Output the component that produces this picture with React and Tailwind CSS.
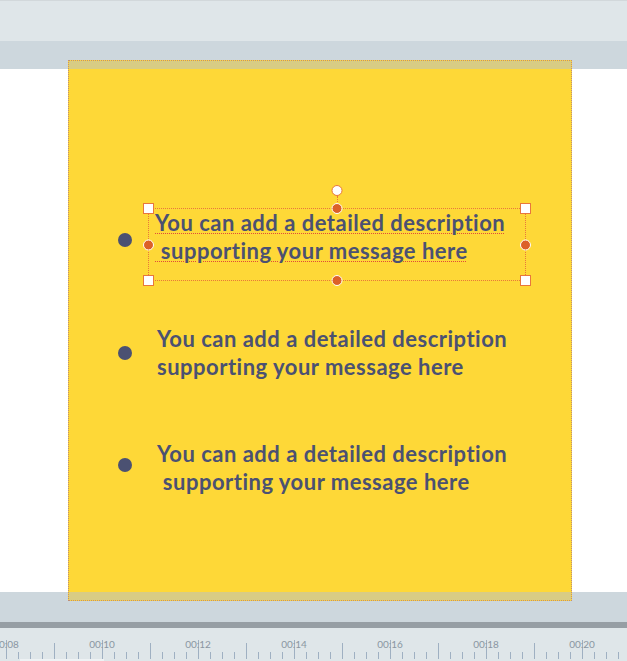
import React from "react";

// the three bullet rows on the slide
const items = [
  { lines: ["You can add a detailed description", " supporting your message here"], dot: 24, gap: "ml-[23px]", selected: true },
  { lines: ["You can add a detailed description", "supporting your message here"], dot: 21, gap: "ml-[25px]", mt: "mt-[60px]" },
  { lines: ["You can add a detailed description", " supporting your message here"], dot: 18, gap: "ml-[25px]", mt: "mt-[59px]" },
];

const labels = ["00:08", "00:10", "00:12", "00:14", "00:16", "00:18", "00:20"];

function Selection() {
  return (
    <div className="absolute left-[30px] top-[-1px] w-[378px] h-[73px] border border-dotted border-[#e8773c] pointer-events-none">
      {/* rotate handle */}
      <div className="absolute left-1/2 -translate-x-1/2 top-[-24px] w-[11px] h-[11px] rounded-full bg-white border-[1.5px] border-[#e8773c]" />
      <div className="absolute left-1/2 top-[-13px] h-[8px] border-l border-dotted border-[#e8773c]" />
      {/* corners */}
      <div className="absolute left-[-6px] top-[-6px] w-[11px] h-[11px] bg-white border-[1.5px] border-[#e8773c]" />
      <div className="absolute right-[-6px] top-[-6px] w-[11px] h-[11px] bg-white border-[1.5px] border-[#e8773c]" />
      <div className="absolute left-[-6px] bottom-[-6px] w-[11px] h-[11px] bg-white border-[1.5px] border-[#e8773c]" />
      <div className="absolute right-[-6px] bottom-[-6px] w-[11px] h-[11px] bg-white border-[1.5px] border-[#e8773c]" />
      {/* mids */}
      <div className="absolute left-1/2 -translate-x-1/2 top-[-6px] w-[11px] h-[11px] rounded-full bg-[#dc6128] border-[1.5px] border-white" />
      <div className="absolute left-1/2 -translate-x-1/2 bottom-[-6px] w-[11px] h-[11px] rounded-full bg-[#dc6128] border-[1.5px] border-white" />
      <div className="absolute top-1/2 -translate-y-1/2 left-[-6px] w-[11px] h-[11px] rounded-full bg-[#dc6128] border-[1.5px] border-white" />
      <div className="absolute top-1/2 -translate-y-1/2 right-[-6px] w-[11px] h-[11px] rounded-full bg-[#dc6128] border-[1.5px] border-white" />
    </div>
  );
}

function Item({ item }) {
  return (
    <div className={`relative flex items-start ${item.mt || ""}`}>
      <div className="w-[14px] h-[14px] rounded-full bg-[#4b5172] shrink-0" style={{ marginTop: item.dot }} />
      <div className={`${item.gap} text-[22px] leading-[28px] tracking-[0.5px] font-bold text-[#4b5172]`}>
        {item.lines.map((l, i) => (
          <div key={i} className="whitespace-pre">
            {item.selected ? (
              <span className="underline decoration-dotted decoration-[#e04a3a] underline-offset-[2px] decoration-1">{l}</span>
            ) : (
              l
            )}
          </div>
        ))}
      </div>
      {item.selected && <Selection />}
    </div>
  );
}

function Ruler() {
  const ticks = [];
  for (let k = 0; k < 53; k++) {
    const x = 6.5 + k * 12;
    let y1 = 24;
    if (k % 8 === 0) y1 = 12;
    else if (k % 4 === 0) y1 = 15;
    ticks.push(<line key={k} x1={x} x2={x} y1={y1} y2={31} stroke="#9fb0c2" strokeWidth="1" />);
  }
  return (
    <div className="relative h-[33px] bg-[#dfe6e9] overflow-hidden">
      <svg className="absolute inset-0" width="627" height="33">
        {ticks}
      </svg>
      <div className="relative flex ml-[-42px] pt-[10px]">
        {labels.map((t) => (
          <div key={t} className="w-[96px] shrink-0 text-center text-[10px] leading-[12px] text-[#8a96a2]">
            {t}
          </div>
        ))}
      </div>
      <div className="absolute bottom-0 left-[20px] w-[84px] h-[2px] bg-[#eef2f4]" />
    </div>
  );
}

export default function App() {
  return (
    <div className="w-[627px] h-[661px] overflow-hidden flex flex-col bg-white" style={{ fontFamily: "Lato, 'Noto Sans', sans-serif" }}>
      <div className="h-px bg-[#d2d8db]" />
      <div className="h-[40px] bg-[#dfe6e9]" />
      <div className="h-[28px] bg-[#cdd7dd]" />
      <div className="h-[523px] bg-white pl-[68px]">
        {/* slide card */}
        <div className="relative z-10 -mt-[9px] w-[504px] h-[541px] border border-dotted border-[#bf8f76] bg-[#fed837] flex flex-col">
          <div className="h-[8px] bg-[#d8cc84]" />
          <div className="flex-1 pl-[49px] pt-[140px]">
            {items.map((it, i) => (
              <Item key={i} item={it} />
            ))}
          </div>
          <div className="h-[8px] bg-[#d8cc84]" />
        </div>
      </div>
      <div className="h-[30px] bg-[#cdd7dd]" />
      <div className="h-[6px] bg-[#969ea4]" />
      <Ruler />
    </div>
  );
}
